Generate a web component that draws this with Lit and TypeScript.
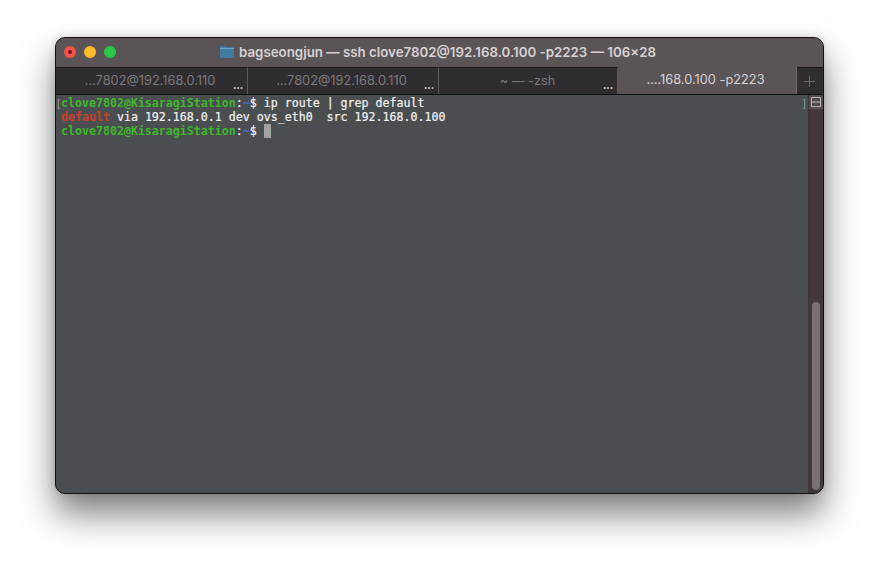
import { LitElement, html, css } from "lit";
import { customElement } from "lit/decorators.js";

@customElement("app-root")
export class AppRoot extends LitElement {
  static styles = css`
    :host { display: block; width: 879px; height: 567px; background: #fff; padding: 37px 55px 0; box-sizing: border-box; overflow: hidden; }
    .win { width: 769px; height: 457px; box-sizing: border-box; border-radius: 10px; border: 1px solid #111; background: #4a4e51; display: flex; flex-direction: column; overflow: hidden;
      box-shadow: 0 20px 34px rgba(0,0,0,.5), 0 0 8px rgba(0,0,0,.14); }
    .title { height: 29px; flex: none; background: #5a5457; position: relative; display: flex; align-items: center; justify-content: center; gap: 5px; padding: 0 3px 2px 0; box-sizing: border-box; }
    .lights { position: absolute; left: 8px; top: 8px; display: flex; gap: 8px; }
    .light { width: 12px; height: 12px; border-radius: 50%; position: relative; }
    .red { background: #f0524c; }
    .red::after { content: ""; position: absolute; left: 4px; top: 4px; width: 4px; height: 4px; border-radius: 50%; background: #7d0f0c; }
    .yellow { background: #fdbb2e; }
    .green { background: #28c840; }
    .name { font: 600 13.3px Inter, "Liberation Sans", sans-serif; color: #d6d2d3; white-space: nowrap; }
    .tabs { height: 28px; flex: none; display: flex; border-bottom: 1px solid #0e0d0e; box-sizing: border-box; }
    .tab { flex: none; box-sizing: border-box; height: 100%; position: relative; display: flex; align-items: center; justify-content: center; font: 400 12.8px Inter, "Liberation Sans", sans-serif; color: #7c797b; background: #2f2d30; border-top: 1px solid #171516; border-right: 1px solid #5c5a5c; white-space: nowrap; padding-bottom: 2px; }
    .tab .more { position: absolute; right: 4px; bottom: 2px; font: 700 12px "Liberation Sans", sans-serif; color: #bdbbbc; }
    .t1 { width: 192px; padding-right: 3px; }
    .t2 { width: 191px; padding-right: 3px; }
    .t3 { width: 179px; padding-right: 1px; }
    .t4 { width: 179px; padding-right: 3px; background: #5a5457; color: #d6d2d3; border-top: 0; border-right: 1px solid #6e696c; }
    .plus { flex: 1; display: flex; align-items: center; justify-content: center; padding-right: 2px; background: #2f2d30; border-top: 1px solid #171516; }
    .body { flex: 1; display: flex; min-height: 0; }
    .term { flex: 1; padding: 1px 0 0 1px; font: 400 11.62px/14px "DejaVu Sans Mono", monospace; color: #f1f1f1; position: relative; }
    .line { height: 14px; display: flex; white-space: pre; }
    .prefix { width: 4px; color: #8f9294; font-family: "Liberation Sans", sans-serif; }
    .g { color: #3fb62a; font-weight: 700; }
    .r { color: #c8402a; font-weight: 700; }
    .b { color: #4f6fd0; font-weight: 700; }
    .w { color: #f3f3f3; -webkit-text-stroke: 0.2px #f3f3f3; }
    .cursor { display: inline-block; width: 7px; height: 14px; background: #a3a3a3; vertical-align: top; }
    .end { position: absolute; right: 2px; top: 1px; color: #8f9294; font-family: "Liberation Sans", sans-serif; }
    .bar { width: 15px; flex: none; background: #41373c; display: flex; flex-direction: column; align-items: center; border-left: 1px solid #3d3539; box-sizing: border-box; }
    .split { width: 100%; height: 14px; background: #544c50; display: flex; align-items: center; justify-content: center; flex: none; border-bottom: 1px solid #5f575a; box-sizing: border-box; }
    .thumb { width: 8px; height: 188px; margin-top: 193px; background: #787174; border-radius: 4px; }
  `;
  render() {
    return html`<div class="win">
      <div class="title">
        <div class="lights"><span class="light red"></span><span class="light yellow"></span><span class="light green"></span></div>
        <svg width="14" height="13" viewBox="0 0 14 13"><path d="M0 2a1 1 0 0 1 1-1h4l1 1h7a1 1 0 0 1 1 1v9a1 1 0 0 1-1 1H1a1 1 0 0 1-1-1z" fill="#3f7da3"/><rect x="0" y="3" width="14" height="1" fill="#6ea3c2"/></svg>
        <span class="name">bagseongjun — ssh clove7802@192.168.0.100 -p2223 — 106×28</span>
      </div>
      <div class="tabs">
        <div class="tab t1">…7802@192.168.0.110<span class="more">...</span></div>
        <div class="tab t2">…7802@192.168.0.110<span class="more">...</span></div>
        <div class="tab t3">~ — -zsh<span class="more">...</span></div>
        <div class="tab t4">….168.0.100 -p2223</div>
        <div class="plus"><svg width="11" height="11" viewBox="0 0 11 11"><path d="M5.5 0v11M0 5.5h11" stroke="#6f6c6e" stroke-width="1"/></svg></div>
      </div>
      <div class="body">
        <div class="term">
          <div class="line"><span class="prefix">[</span><span><span class="g">clove7802@KisaragiStation</span><span class="w">:</span><span class="b">~</span><span class="w">$ ip route | grep default</span></span></div>
          <div class="line"><span class="prefix"></span><span><span class="r">default</span><span class="w"> via 192.168.0.1 dev ovs_eth0  src 192.168.0.100</span></span></div>
          <div class="line"><span class="prefix"></span><span><span class="g">clove7802@KisaragiStation</span><span class="w">:</span><span class="b">~</span><span class="w">$ </span><span class="cursor"></span></span></div>
          <span class="end">]</span>
        </div>
        <div class="bar">
          <div class="split"><svg width="10" height="10" viewBox="0 0 10 10"><rect x=".5" y=".5" width="9" height="9" fill="none" stroke="#b9b5b7"/><path d="M0 5h10" stroke="#b9b5b7"/></svg></div>
          <div class="thumb"></div>
        </div>
      </div>
    </div>`;
  }
}
